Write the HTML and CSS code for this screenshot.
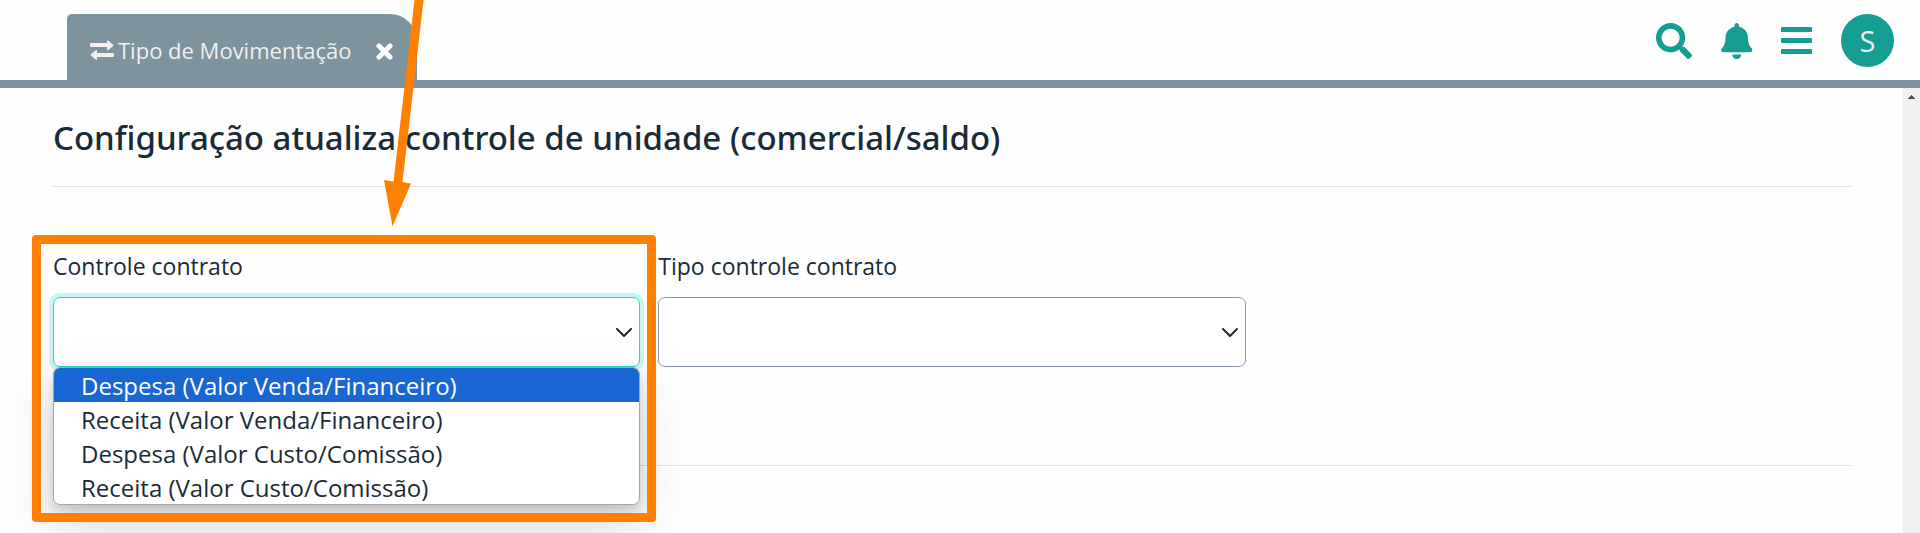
FILE: index.html
```html
<!DOCTYPE html>
<html lang="pt-BR">
<head>
<meta charset="utf-8">
<meta name="viewport" content="width=device-width, initial-scale=1">
<title>Tipo de Movimentação</title>
<link rel="stylesheet" href="styles.css">
</head>
<body>
<div class="page">
  <header class="topbar">
    <div class="tab">
      <a class="tab-link" href="#tipo-movimentacao">
        <svg class="icon-exchange" viewBox="0 0 24 20" aria-hidden="true"><path d="M1 3h16V1.300q0-1.800 1.300-.6l4.600 3.900q.9.800 0 1.600l-4.600 3.900q-1.300 1.200-1.300-.6V7H1Q0 7 0 6V4q0-1 1-1zM23 13H7v-2.200q0-1.800-1.300-.6L1.100 14.100q-.9.800 0 1.600l4.600 3.900q1.300 1.200 1.300-.6v-2h16q1 0 1-1v-2q0-1-1-1z"/></svg>
        <span>Tipo de Movimentação</span>
      </a>
      <button class="tab-close" type="button" aria-label="Fechar">
        <svg class="icon-close" viewBox="0 0 17 17" aria-hidden="true"><path d="M3 3l11 11M14 3L3 14"/></svg>
      </button>
    </div>
    <nav class="actions" aria-label="Ações">
      <button class="action" type="button" aria-label="Buscar">
        <svg class="icon-action" viewBox="0 0 512 512" aria-hidden="true"><path d="M505 442.700L405.300 343c-4.500-4.500-10.600-7-17-7H372c27.600-35.300 44-79.700 44-128C416 93.100 322.900 0 208 0S0 93.100 0 208s93.100 208 208 208c48.300 0 92.700-16.400 128-44v16.300c0 6.400 2.500 12.500 7 17l99.700 99.700c9.400 9.400 24.600 9.400 33.900 0l28.300-28.300c9.400-9.400 9.400-24.600.1-34zM208 336c-70.700 0-128-57.200-128-128 0-70.700 57.200-128 128-128 70.700 0 128 57.200 128 128 0 70.700-57.200 128-128 128z"/></svg>
      </button>
      <button class="action" type="button" aria-label="Notificações">
        <svg class="icon-action" viewBox="0 0 448 512" aria-hidden="true"><path d="M224 512c35.320 0 63.970-28.650 63.970-64H160.030c0 35.350 28.650 64 63.970 64zm215.390-149.710c-19.320-20.760-55.470-51.990-55.470-154.290 0-77.700-54.480-139.900-127.940-155.160V32c0-17.670-14.320-32-31.980-32s-31.980 14.330-31.980 32v20.840C118.560 68.100 64.080 130.300 64.080 208c0 102.300-36.150 133.530-55.470 154.290-6 6.450-8.660 14.160-8.610 21.710.11 16.400 12.980 32 32.100 32h383.800c19.120 0 32-15.600 32.100-32 .05-7.550-2.610-15.270-8.610-21.710z"/></svg>
      </button>
      <button class="action" type="button" aria-label="Menu">
        <svg class="icon-action" viewBox="0 0 31 36" aria-hidden="true"><path d="M1 4h29q1 0 1 1v3q0 1-1 1H1Q0 9 0 8V5q0-1 1-1zM1 15h29q1 0 1 1v3q0 1-1 1H1q-1 0-1-1v-3q0-1 1-1zM1 26h29q1 0 1 1v3q0 1-1 1H1q-1 0-1-1v-3q0-1 1-1z"/></svg>
      </button>
      <button class="avatar" type="button">S</button>
    </nav>
  </header>

  <div class="workspace">
    <main class="content">
      <h1 class="title">Configuração atualiza controle de unidade (comercial/saldo)</h1>
      <form class="fields">
        <div class="field field-open">
          <label class="label" for="controle">Controle contrato</label>
          <div class="control">
            <select class="select select-focus" id="controle"><option value=""></option></select>
            <svg class="chevron" viewBox="0 0 16 10" aria-hidden="true"><path d="M1 1l7 7 7-7"/></svg>
            <ul class="options" role="listbox" aria-label="Opções">
              <li class="option option-active" role="option" aria-selected="true">Despesa (Valor Venda/Financeiro)</li>
              <li class="option" role="option">Receita (Valor Venda/Financeiro)</li>
              <li class="option" role="option">Despesa (Valor Custo/Comissão)</li>
              <li class="option" role="option">Receita (Valor Custo/Comissão)</li>
            </ul>
          </div>
          <div class="highlight"></div>
        </div>
        <div class="field">
          <label class="label" for="tipo">Tipo controle contrato</label>
          <div class="control">
            <select class="select" id="tipo"><option value=""></option></select>
            <svg class="chevron" viewBox="0 0 16 10" aria-hidden="true"><path d="M1 1l7 7 7-7"/></svg>
          </div>
        </div>
      </form>
    </main>
    <div class="scrollbar">
      <svg class="scroll-arrow" viewBox="0 0 7 4" aria-hidden="true"><path d="M3 0h1v1h1v1h1v1h1v1H0V3h1V2h1V1h1z"/></svg>
    </div>
  </div>

  <svg class="pointer" viewBox="0 0 40 227" aria-hidden="true"><path d="M30.500 0h9L18.500 182l8.500 1.500L8.500 226.500 0 180l9.500 1.500z"/></svg>
</div>
</body>
</html>
```
FILE: styles.css
```css
* {
  box-sizing: border-box;
}

body {
  margin: 0;
  background: #fefefe;
  color: #192b36;
  font-family: "Segoe UI", "Open Sans", "Noto Sans", sans-serif;
  font-size: 24px;
  line-height: 34px;
}

button {
  padding: 0;
  border: 0;
  background: none;
  font: inherit;
}

.page {
  position: relative;
  display: flex;
  flex-direction: column;
  min-height: 100vh;
  overflow: hidden;
}

/* Top bar */
.topbar {
  display: flex;
  justify-content: space-between;
  padding: 14px 26px 0 67px;
  border-bottom: 8px solid #7d939e;
}

.tab {
  display: flex;
  align-items: center;
  gap: 25px;
  height: 66px;
  padding: 5px 24px 0 23px;
  border-radius: 5px 27px 0 0;
  background: #7d939e;
}

.tab-link {
  display: flex;
  align-items: center;
  gap: 4px;
  color: #f0f0f0;
  font-size: 22px;
  text-decoration: none;
}

.icon-exchange {
  width: 24px;
  height: 20px;
  fill: currentColor;
}

.tab-close {
  display: flex;
  padding-top: 4px;
}

.icon-close {
  width: 17px;
  height: 17px;
  fill: none;
  stroke: #fff;
  stroke-width: 5px;
  stroke-linecap: round;
}

.actions {
  display: flex;
  align-items: flex-start;
  gap: 29px;
}

.action {
  display: flex;
  padding-top: 9px;
}

.icon-action {
  height: 36px;
  fill: #139d93;
}

.avatar {
  width: 53px;
  height: 53px;
  border-radius: 50%;
  background: #139d93;
  color: #eee;
  font-size: 29px;
}

/* Content */
.workspace {
  display: flex;
  flex: 1;
}

.content {
  flex: 1;
  padding: 26px 52px 0 53px;
}

.title {
  margin: 0;
  padding-bottom: 24px;
  border-bottom: 1px solid #e2e2e2;
  font-family: "Segoe UI", "Noto Sans", "Open Sans", sans-serif;
  font-size: 33px;
  font-weight: 500;
  line-height: 48px;
}

.fields {
  display: grid;
  grid-template-columns: repeat(3, 1fr);
  gap: 18px;
  padding: 62px 0 98px;
  border-bottom: 1px solid #e2e2e2;
}

.field {
  position: relative;
  display: flex;
  flex-direction: column;
  gap: 14px;
}

.field-open {
  z-index: 1;
}

.label {
  font-size: 23px;
}

.control {
  position: relative;
}

.select {
  display: block;
  width: 100%;
  height: 70px;
  padding: 0 28px;
  border: 1px solid #8291a8;
  border-radius: 7px;
  outline: 0;
  appearance: none;
  background: #fff;
  color: inherit;
  font: inherit;
}

.select-focus {
  border-color: #26d4c8;
  box-shadow: 0 0 0 4px #c8f5f1;
}

.chevron {
  position: absolute;
  top: 31px;
  right: 8px;
  width: 16px;
  height: 10px;
  fill: none;
  stroke: #192b36;
  stroke-width: 2px;
  stroke-linecap: round;
  stroke-linejoin: round;
  pointer-events: none;
}

.options {
  position: absolute;
  top: 100%;
  right: 0;
  left: 0;
  margin: 0;
  padding: 0;
  overflow: hidden;
  border: 1px solid #a6a6a6;
  border-radius: 7px;
  background: #fff;
  box-shadow: 0 6px 12px rgba(0, 0, 0, 0.14), 0 20px 50px rgba(0, 0, 0, 0.16);
  list-style: none;
}

.option {
  padding: 1px 27px 0;
  line-height: 33px;
}

.option-active {
  background: #1967d2;
  color: #fff;
}

/* Annotation drawn over the form */
.highlight {
  position: absolute;
  inset: -14px -16px -155px -21px;
  border: 9px solid #ff8000;
  border-radius: 4px;
  pointer-events: none;
}

.pointer {
  position: absolute;
  top: 0;
  left: 384px;
  z-index: 2;
  width: 40px;
  height: 227px;
  fill: #ff8000;
  pointer-events: none;
}

.scrollbar {
  display: flex;
  justify-content: center;
  width: 17px;
  padding-top: 7px;
  background: #f0f0f0;
}

.scroll-arrow {
  width: 7px;
  height: 4px;
  fill: #505050;
}
```
